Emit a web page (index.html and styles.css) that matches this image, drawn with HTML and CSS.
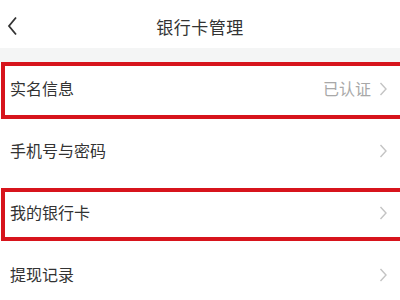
FILE: index.html
```html
<!DOCTYPE html>
<html lang="zh-CN">
<head>
    <meta charset="UTF-8">
    <meta name="viewport" content="width=device-width, initial-scale=1.0">
    <title>银行卡管理</title>
    <link rel="stylesheet" href="styles.css">
</head>
<body>
    <div class="header">
        <svg class="back" width="12" height="20" viewBox="0 0 12 20">
            <polyline points="9,1.5 2,10 9,18.5" fill="none" stroke="#333" stroke-width="1.8" stroke-linejoin="miter"/>
        </svg>
        <div class="title">银行卡管理</div>
    </div>
    <div class="gap"></div>

    <div class="list">
        <div class="row marked first">
            <span class="label">实名信息</span>
            <span class="value">已认证</span>
            <svg class="arrow" width="9" height="14" viewBox="0 0 9 14"><polyline points="1.5,1 7,7 1.5,13" fill="none" stroke="#c4c4c4" stroke-width="1.4"/></svg>
        </div>
        <div class="row">
            <span class="label">手机号与密码</span>
            <svg class="arrow" width="9" height="14" viewBox="0 0 9 14"><polyline points="1.5,1 7,7 1.5,13" fill="none" stroke="#c4c4c4" stroke-width="1.4"/></svg>
        </div>
        <div class="row marked third">
            <span class="label">我的银行卡</span>
            <svg class="arrow" width="9" height="14" viewBox="0 0 9 14"><polyline points="1.5,1 7,7 1.5,13" fill="none" stroke="#c4c4c4" stroke-width="1.4"/></svg>
        </div>
        <div class="row">
            <span class="label">提现记录</span>
            <svg class="arrow" width="9" height="14" viewBox="0 0 9 14"><polyline points="1.5,1 7,7 1.5,13" fill="none" stroke="#c4c4c4" stroke-width="1.4"/></svg>
        </div>
    </div>
</body>
</html>
```
FILE: styles.css
```css
body {
    margin: 0;
    font-family: "Noto Sans CJK SC", "Noto Sans", sans-serif;
    background-color: #fff;
    color: #333;
    overflow: hidden;
}
.header {
    height: 48px;
    position: relative;
    display: flex;
    align-items: center;
    justify-content: center;
}
.back {
    position: absolute;
    left: 7px;
    top: 16px;
}
.title {
    font-size: 17px;
    letter-spacing: 0.5px;
    color: #333;
    margin-top: 4px;
}
.gap {
    height: 14px;
    background-color: #f4f5f5;
}
.row {
    position: relative;
    height: 62px;
    box-sizing: border-box;
    padding: 15px 12px 0 10px;
    display: flex;
    align-items: flex-start;
}
.label {
    flex: 1;
    font-size: 16px;
    line-height: 22px;
}
.value {
    font-size: 16px;
    line-height: 22px;
    color: #a8a8a8;
    margin-right: 8px;
}
.arrow {
    margin-top: 5px;
}
.marked::after {
    content: "";
    position: absolute;
    left: 1px;
    right: -6px;
    border: 4px solid #d7141c;
}
.first::after {
    top: 0;
    height: 49px;
}
.third::after {
    top: 2px;
    height: 45px;
}
```
